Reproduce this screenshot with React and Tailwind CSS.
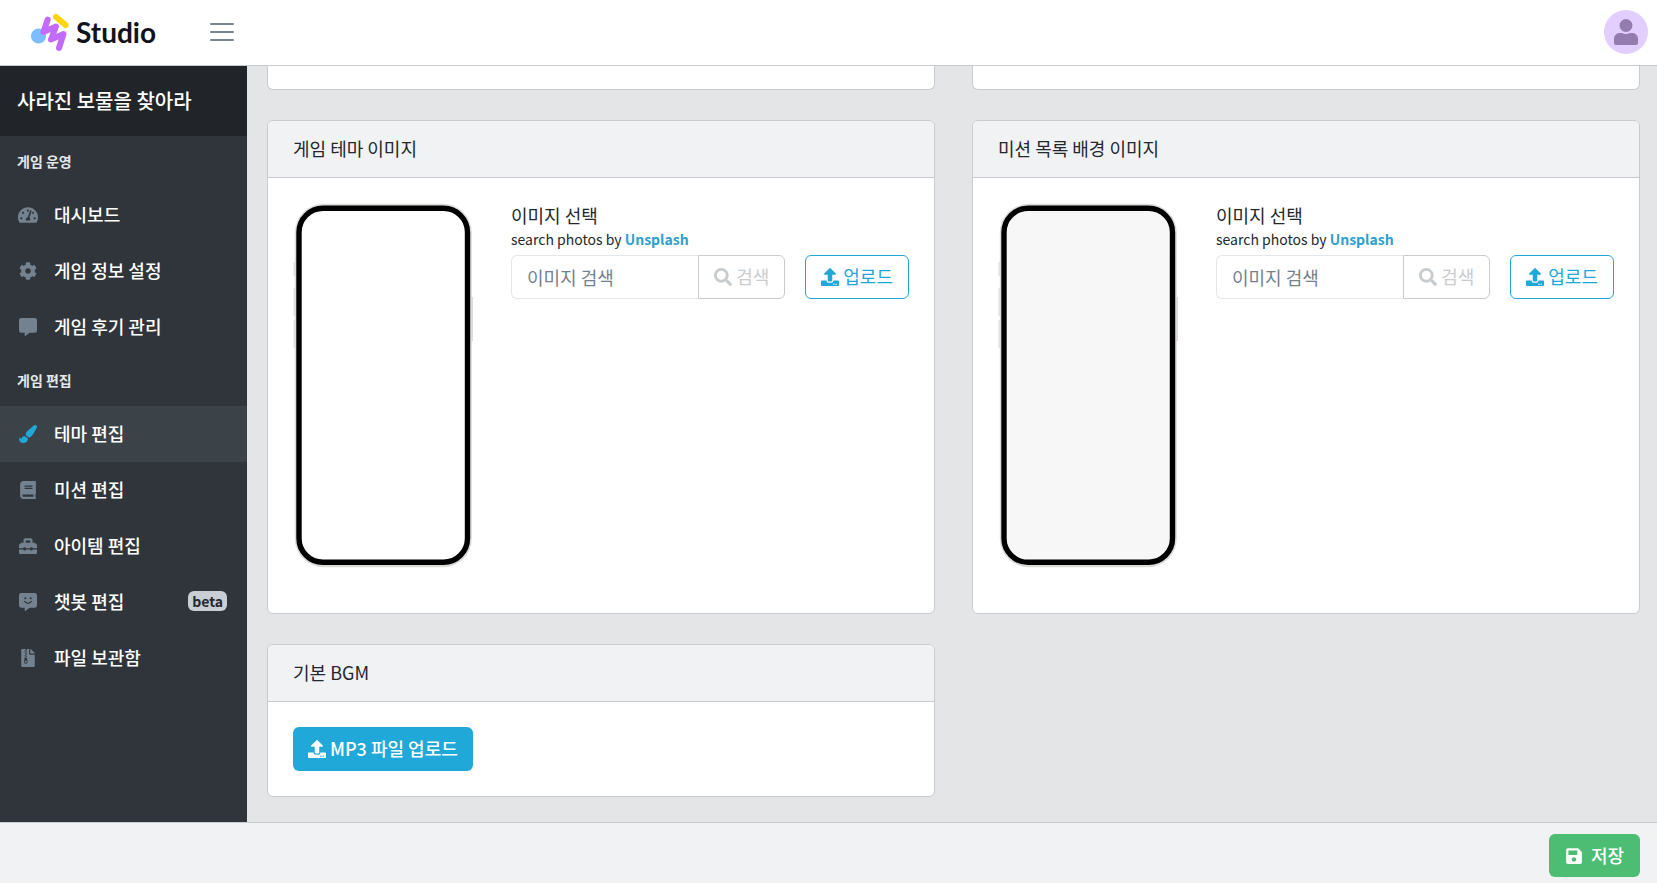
import React, { useState } from "react";
import {
  FaTachometerAlt,
  FaCog,
  FaCommentAlt,
  FaPaintBrush,
  FaBook,
  FaToolbox,
  FaFileArchive,
  FaSearch,
  FaUpload,
  FaSave,
} from "react-icons/fa";

const menuGroups = [
  {
    title: "게임 운영",
    items: [
      { path: "#dashboard", label: "대시보드", icon: FaTachometerAlt, wide: true },
      { path: "#info", label: "게임 정보 설정", icon: FaCog },
      { path: "#reviews", label: "게임 후기 관리", icon: FaCommentAlt },
    ],
  },
  {
    title: "게임 편집",
    items: [
      { path: "#theme", label: "테마 편집", icon: FaPaintBrush, active: true },
      { path: "#missions", label: "미션 편집", icon: FaBook },
      { path: "#items", label: "아이템 편집", icon: FaToolbox },
      { path: "#chatbot", label: "챗봇 편집", icon: SmileMessageIcon, badge: "beta" },
      { path: "#files", label: "파일 보관함", icon: FaFileArchive },
    ],
  },
];

function SmileMessageIcon({ className }) {
  return (
    <svg viewBox="0 0 512 512" className={className} aria-hidden="true">
      <path
        fill="currentColor"
        d="M448 0H64C28.700 0 0 28.700 0 64v288c0 35.300 28.700 64 64 64h96v84c0 9.800 11.200 15.500 19.100 9.700L304 416h144c35.300 0 64-28.700 64-64V64c0-35.300-28.700-64-64-64z"
      />
      <g className="text-[#2f353a]">
        <circle cx="180" cy="150" r="28" fill="currentColor" />
        <circle cx="332" cy="150" r="28" fill="currentColor" />
        <path
          d="M160 240c48 70 144 70 192 0"
          fill="none"
          stroke="currentColor"
          strokeWidth="34"
          strokeLinecap="round"
        />
      </g>
    </svg>
  );
}

function Logo() {
  return (
    <a href="#home" className="flex items-center gap-1.5" aria-label="Studio">
      <svg width="42" height="42" viewBox="0 0 42 42" fill="none" aria-hidden="true">
        <circle cx="10.500" cy="25" r="7.600" fill="#7cbcff" />
        <path d="M28 6l9.500 8" stroke="#ffd60a" strokeWidth="6" strokeLinecap="round" />
        <path
          d="M19.700 8.500L15.500 21L28 15.500L23 28.500L35.500 23L31 37"
          stroke="#c36bff"
          strokeWidth="6"
          strokeLinecap="round"
          strokeLinejoin="round"
        />
      </svg>
      <span className="font-[Lato,sans-serif] text-[28px] leading-8 font-bold text-[#10121c]">
        Studio
      </span>
    </a>
  );
}

function Header({ onToggle }) {
  return (
    <header className="flex h-[66px] shrink-0 items-center justify-between border-b border-[#c8ccd0] bg-white pr-[9px] pb-0.5 pl-7">
      <div className="flex items-center gap-[54px]">
        <Logo />
        <button type="button" aria-label="메뉴" onClick={onToggle} className="text-[#768692]">
          <svg width="24" height="20" viewBox="0 0 24 20" aria-hidden="true">
            <path
              d="M1 2h22M1 10h22M1 18h22"
              stroke="currentColor"
              strokeWidth="2"
              strokeLinecap="round"
            />
          </svg>
        </button>
      </div>
      <button
        type="button"
        aria-label="내 계정"
        className="flex size-11 items-center justify-center rounded-full bg-[#e3cfff] text-[#957cb0]"
      >
        <svg width="24" height="26" viewBox="0 0 24 26" fill="currentColor" aria-hidden="true">
          <circle cx="12" cy="6.500" r="6.500" />
          <path d="M6 14h2c2.500 1.300 5.500 1.300 8 0h2c3.500 0 6 2.500 6 6v4c0 1.200-.8 2-2 2H2c-1.200 0-2-.8-2-2v-4c0-3.500 2.500-6 6-6z" />
        </svg>
      </button>
    </header>
  );
}

function Sidebar() {
  return (
    <aside className="w-[247px] shrink-0 bg-[#2f353a] text-white">
      <h1 className="flex h-[70px] items-center bg-[#212529] px-[17px] text-xl font-medium">
        사라진 보물을 찾아라
      </h1>
      <nav>
        {menuGroups.map((group) => (
          <div key={group.title}>
            <h2 className="px-[17px] py-[15px] text-sm leading-[21px] font-bold text-[#e4e7ea]">
              {group.title}
            </h2>
            <ul>
              {group.items.map(({ path, label, icon: Icon, active, badge, wide }) => (
                <li key={path}>
                  <a
                    href={path}
                    className={`flex h-14 items-center pr-5 pl-[17px] text-lg font-medium ${
                      active ? "bg-[#3b4248]" : ""
                    }`}
                  >
                    <span
                      className={`flex w-[22px] justify-center ${
                        active ? "text-[#20a8d8]" : "text-[#748290]"
                      }`}
                    >
                      <Icon className={wide ? "size-5" : "size-[18px]"} />
                    </span>
                    <span className="ml-[15px] pb-0.5">{label}</span>
                    {badge && (
                      <span className="mb-0.5 ml-auto rounded-md bg-[#c8ced3] px-1 text-sm leading-5 font-bold text-[#23282c]">
                        {badge}
                      </span>
                    )}
                  </a>
                </li>
              ))}
            </ul>
          </div>
        ))}
      </nav>
    </aside>
  );
}

function Card({ title, children }) {
  return (
    <section className="overflow-hidden rounded-md border border-[#c8ccd0] bg-white">
      <h3 className="border-b border-[#c8ccd0] bg-[#f0f2f4] px-[25px] pt-[13px] pb-[15px] text-lg leading-7">
        {title}
      </h3>
      <div className="p-[25px]">{children}</div>
    </section>
  );
}

function PhoneFrame({ screen }) {
  return (
    <svg width="180" height="365" viewBox="0 0 180 365" className="shrink-0" aria-hidden="true">
      <path d="M1.500 59v14M1.500 85v28M1.500 117v28" stroke="#dfe5e2" strokeWidth="2" />
      <path d="M179 94v44" stroke="#e0d8d8" strokeWidth="2" />
      <rect x="1.800" y="0.800" width="177" height="363.500" rx="29" fill="#dcdbd8" />
      <rect x="6" y="5.300" width="168.500" height="354" rx="24" fill={screen} stroke="#000" strokeWidth="5.400" />
    </svg>
  );
}

function ImagePicker({ id, screen }) {
  const [keyword, setKeyword] = useState("");

  return (
    <div className="flex min-h-[385px] items-start gap-[38px]">
      <PhoneFrame screen={screen} />
      <div className="min-w-0 flex-1">
        <label htmlFor={id} className="block text-lg leading-[25px]">
          이미지 선택
        </label>
        <p className="mb-[5px] text-sm leading-[22px]">
          search photos by{" "}
          <a href="#unsplash" className="font-bold text-[#2d9fd0]">
            Unsplash
          </a>
        </p>
        <div className="flex gap-5">
          <div className="flex min-w-0 flex-1">
            <input
              id={id}
              type="text"
              placeholder="이미지 검색"
              value={keyword}
              onChange={(e) => setKeyword(e.target.value)}
              className="h-11 min-w-0 flex-1 rounded-l-md border border-r-0 border-[#e4e7ea] px-[15px] text-lg placeholder:text-[#73818f]"
            />
            <button
              type="button"
              disabled={!keyword}
              className="flex h-11 shrink-0 items-center gap-1 rounded-r-md border border-[#c8cccf] px-[15px] text-lg text-[#c8cccf]"
            >
              <FaSearch />
              <span className="pb-0.5">검색</span>
            </button>
          </div>
          <button
            type="button"
            className="flex h-11 shrink-0 items-center gap-1 rounded-md border border-[#20a8d8] px-[15px] text-lg text-[#20a8d8]"
          >
            <FaUpload />
            <span className="pb-0.5">업로드</span>
          </button>
        </div>
      </div>
    </div>
  );
}

function App() {
  const [sidebarOpen, setSidebarOpen] = useState(true);

  return (
    <div className="flex h-screen flex-col bg-[#e4e5e6] font-['Noto_Sans_CJK_KR',sans-serif] text-[#23282c]">
      <Header onToggle={() => setSidebarOpen(!sidebarOpen)} />

      <div className="flex min-h-0 flex-1">
        {sidebarOpen && <Sidebar />}

        <main className="min-w-0 flex-1 overflow-hidden pr-[17px] pl-5">
          <div className="grid grid-cols-2 items-start gap-x-[37px] gap-y-[30px]">
            <div className="h-6 rounded-b-md border border-t-0 border-[#c8ccd0] bg-white" />
            <div className="h-6 rounded-b-md border border-t-0 border-[#c8ccd0] bg-white" />

            <Card title="게임 테마 이미지">
              <ImagePicker id="theme-image" screen="#fff" />
            </Card>
            <Card title="미션 목록 배경 이미지">
              <ImagePicker id="mission-image" screen="#f7f7f7" />
            </Card>

            <Card title="기본 BGM">
              <button
                type="button"
                className="flex h-11 items-center gap-1 rounded-md bg-[#20a8d8] px-[15px] text-lg font-medium text-white"
              >
                <FaUpload />
                <span className="pb-0.5">MP3 파일 업로드</span>
              </button>
            </Card>
          </div>
        </main>
      </div>

      <footer className="flex shrink-0 justify-end border-t border-[#c8ccd0] bg-[#f0f2f4] pt-[11px] pr-[17px] pb-[6px]">
        <button
          type="button"
          className="flex h-[43px] items-center gap-2 rounded-md bg-[#4dbd74] px-4 text-lg font-medium text-white"
        >
          <FaSave />
          <span className="pb-0.5">저장</span>
        </button>
      </footer>
    </div>
  );
}

export default App;
